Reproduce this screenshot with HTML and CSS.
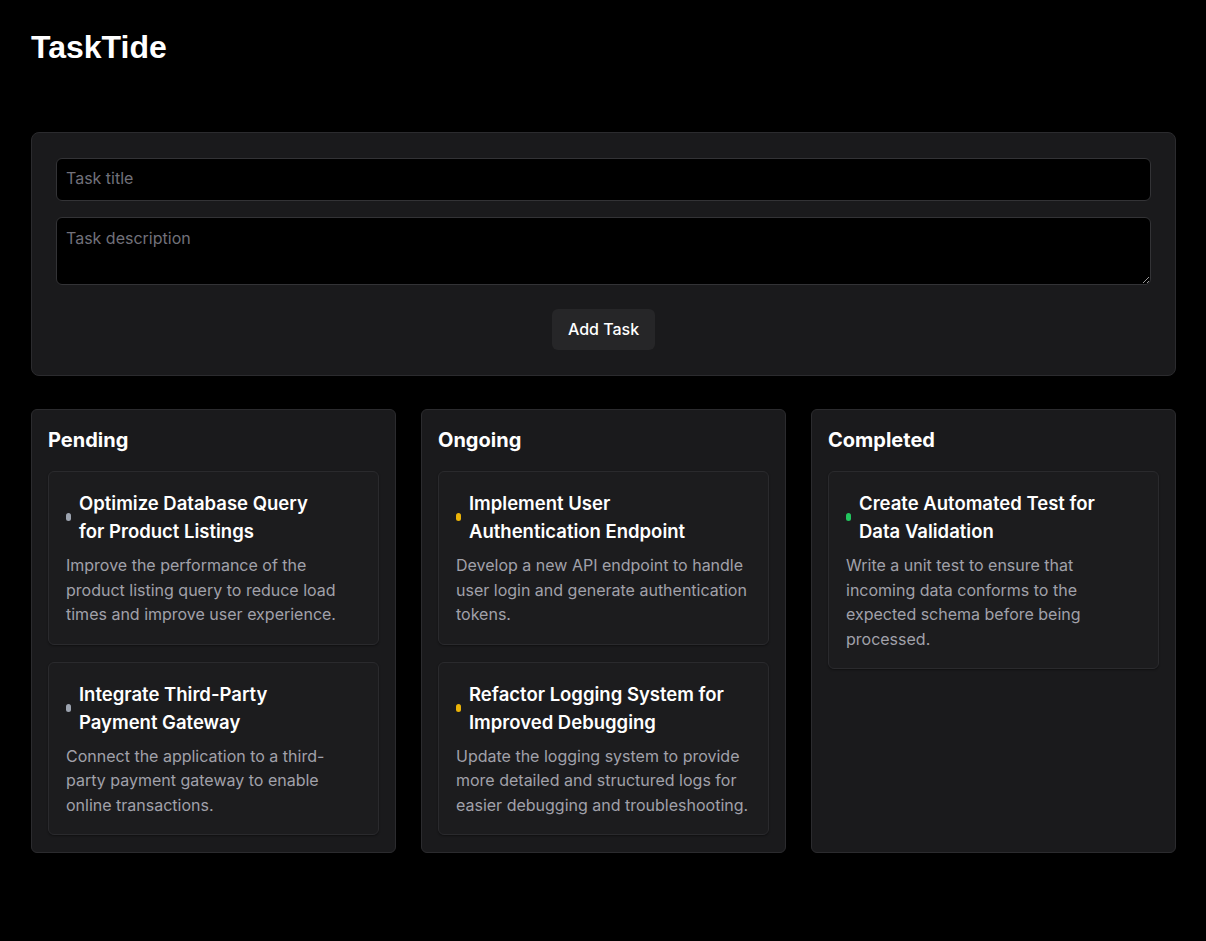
FILE: index.html
```html
<!DOCTYPE html>
<html lang="en">
<head>
<meta charset="utf-8">
<title>TaskTide</title>
<link rel="stylesheet" href="styles.css">
</head>
<body>
<div class="app">
  <h1 class="brand">TaskTide</h1>

  <form class="task-form">
    <input class="field" type="text" placeholder="Task title">
    <textarea class="field field-area" placeholder="Task description"></textarea>
    <div class="form-actions">
      <button class="btn" type="button">Add Task</button>
    </div>
  </form>

  <div class="board">
    <section class="column">
      <h2 class="column-title">Pending</h2>
      <div class="cards">
        <article class="card">
          <div class="card-head">
            <span class="dot dot-pending"></span>
            <h3 class="card-title">Optimize Database Query<br>for Product Listings</h3>
          </div>
          <p class="card-desc">Improve the performance of the product listing query to reduce load times and improve user experience.</p>
        </article>
        <article class="card">
          <div class="card-head">
            <span class="dot dot-pending"></span>
            <h3 class="card-title">Integrate Third-Party<br>Payment Gateway</h3>
          </div>
          <p class="card-desc">Connect the application to a third-party payment gateway to enable online transactions.</p>
        </article>
      </div>
    </section>

    <section class="column">
      <h2 class="column-title">Ongoing</h2>
      <div class="cards">
        <article class="card">
          <div class="card-head">
            <span class="dot dot-ongoing"></span>
            <h3 class="card-title">Implement User<br>Authentication Endpoint</h3>
          </div>
          <p class="card-desc">Develop a new API endpoint to handle user login and generate authentication tokens.</p>
        </article>
        <article class="card">
          <div class="card-head">
            <span class="dot dot-ongoing"></span>
            <h3 class="card-title">Refactor Logging System for<br>Improved Debugging</h3>
          </div>
          <p class="card-desc">Update the logging system to provide more detailed and structured logs for easier debugging and troubleshooting.</p>
        </article>
      </div>
    </section>

    <section class="column">
      <h2 class="column-title">Completed</h2>
      <div class="cards">
        <article class="card">
          <div class="card-head">
            <span class="dot dot-completed"></span>
            <h3 class="card-title">Create Automated Test for<br>Data Validation</h3>
          </div>
          <p class="card-desc">Write a unit test to ensure that incoming data conforms to the expected schema before being processed.</p>
        </article>
      </div>
    </section>
  </div>
</div>
</body>
</html>
```

FILE: styles.css
```css
* { box-sizing: border-box; }

html, body {
  margin: 0;
  background: #000;
  color: #fff;
}

body {
  font-family: Inter, "Liberation Sans", Arial, sans-serif;
}

.app {
  padding: 29px 30px 40px 31px;
}

.brand {
  font-family: "Liberation Sans", Arial, sans-serif;
  font-size: 32px;
  font-weight: 700;
  line-height: 36px;
  margin: 0 0 67px;
  color: #fff;
}

.task-form {
  background: #1a1a1c;
  border: 1px solid #2b2b2e;
  border-radius: 8px;
  padding: 25px 24px 25px;
  display: flex;
  flex-direction: column;
  gap: 16px;
  margin: 0 0 33px;
}

.field {
  display: block;
  width: 100%;
  background: #000;
  color: #fff;
  border: 1px solid #333336;
  border-radius: 6px;
  font-family: Inter, "Liberation Sans", Arial, sans-serif;
  font-size: 16px;
  height: 43px;
  padding: 0 9px 3px;
  outline: none;
}

.field::placeholder { color: #71717a; }

.field-area {
  height: 68px;
  padding: 10px 9px;
  resize: vertical;
}

.form-actions {
  display: flex;
  justify-content: center;
  padding-top: 8px;
}

.btn {
  background: #262628;
  color: #fff;
  border: none;
  border-radius: 6px;
  font-family: Inter, "Liberation Sans", Arial, sans-serif;
  font-size: 16px;
  font-weight: 500;
  height: 41px;
  width: 103px;
  padding: 0 0 2px;
  cursor: pointer;
}

.board {
  display: grid;
  grid-template-columns: repeat(3, 1fr);
  gap: 25px;
}

.column {
  background: #1a1a1c;
  border: 1px solid #2b2b2e;
  border-radius: 6px;
  padding: 16px 16px 17px;
}

.column-title {
  margin: 0 0 17px;
  font-size: 20px;
  line-height: 28px;
  font-weight: 700;
}

.cards {
  display: flex;
  flex-direction: column;
  gap: 17px;
}

.card {
  background: #1c1c1e;
  border: 1px solid #2a2a2d;
  border-radius: 6px;
  padding: 17px 17px 17px;
  box-shadow: 0 1px 2px rgba(0,0,0,0.4);
}

.card-head {
  display: flex;
  align-items: center;
  gap: 8px;
  margin-bottom: 8px;
}

.dot {
  flex: 0 0 5px;
  width: 5px;
  height: 8px;
  border-radius: 3px;
}

.dot-pending { background: #9ca3af; }
.dot-ongoing { background: #eab308; }
.dot-completed { background: #22c55e; }

.card-title {
  margin: 0;
  font-size: 18.5px;
  line-height: 28px;
  font-weight: 600;
  color: #fff;
}

.card-desc {
  margin: 0;
  font-size: 16px;
  line-height: 24.5px;
  color: #a1a1aa;
}
```
